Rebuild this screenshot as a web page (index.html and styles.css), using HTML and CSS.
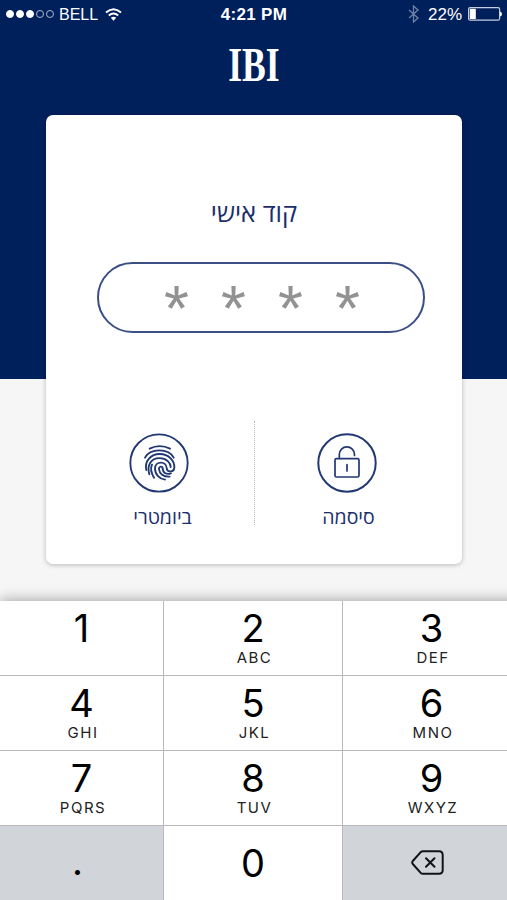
FILE: index.html
```html
<!DOCTYPE html>
<html lang="he">
<head>
    <meta charset="UTF-8">
    <meta name="viewport" content="width=device-width, initial-scale=1.0">
    <title>IBI</title>
    <link rel="stylesheet" href="styles.css">
</head>
<body>

    <header class="header">
        <div class="status-bar">
            <div class="status-left">
                <div class="signal">
                    <i class="full"></i><i class="full"></i><i class="full"></i><i></i><i></i>
                </div>
                <span class="carrier">BELL</span>
                <svg class="wifi" width="17" height="13" viewBox="0 0 17 13" fill="none" stroke="#fff" stroke-width="2">
                    <path d="M1 4.6Q8.5 -2 16 4.6"/>
                    <path d="M3.8 7.5Q8.5 3.4 13.2 7.5"/>
                    <path d="M8.5 12.8L5.8 9.8Q8.5 7.6 11.2 9.8Z" fill="#fff" stroke="none"/>
                </svg>
            </div>
            <span class="time">4:21 PM</span>
            <div class="status-right">
                <svg class="bluetooth" width="11" height="18" viewBox="0 0 11 18" fill="none" stroke="#6d83a8" stroke-width="1.3">
                    <path d="M1 5L10 13L5.5 17V1L10 5L1 13"/>
                </svg>
                <span class="percent">22%</span>
                <svg class="battery" width="34" height="14" viewBox="0 0 34 14">
                    <rect x=".6" y=".6" width="31" height="12.6" rx="1.5" fill="none" stroke="#c3cde0" stroke-width="1.2"/>
                    <rect x="1.8" y="1.8" width="6" height="10.2" fill="#fff"/>
                    <path d="M32 4.5Q34 5 34 7T32 9.5Z" fill="#fff"/>
                </svg>
            </div>
        </div>
        <div class="logo">IBI</div>
    </header>

    <main class="card">
        <h1 class="title" dir="rtl">קוד אישי</h1>
        <div class="code">
            <span>*</span><span>*</span><span>*</span><span>*</span>
        </div>
        <div class="options">
            <div class="option biometric">
                <svg width="60" height="60" viewBox="25 55 180 180" fill="none" stroke="#213873" stroke-width="5.6" stroke-linecap="round">
                    <circle cx="115" cy="145" r="86"/>
                    <path d="M87 102Q117 87 148 102"/>
                    <path d="M73 129C88 100 144 100 159 129"/>
                    <path d="M77 166C71 139 91 118 117 118C145 118 162 139 161 158C160 174 139 174 138 160C137 138 103 138 103 162C103 179 117 193 133 195"/>
                    <path d="M86 179C78 153 90 130.500 117 130.500C138 130.500 150 145 150 157"/>
                    <path d="M100 189C91 174 89 160 94 150"/>
                    <path d="M115 161C116 154 126 154 126 162C127 176 138 180 151 176"/>
                    <path d="M115 163C116 177 128 187 147 186"/>
                </svg>
                <span class="label" dir="rtl">ביומטרי</span>
            </div>
            <div class="divider"></div>
            <div class="option password">
                <svg width="60" height="60" viewBox="0 0 60 60" fill="none" stroke="#213873" stroke-width="1.7" stroke-linecap="round">
                    <circle cx="30" cy="30" r="28.7" stroke-width="2"/>
                    <rect x="18" y="25.7" width="24" height="18.3" rx="1.5"/>
                    <path d="M22.3 25.5V21.5A7.6 7.6 0 0 1 37.5 21.5V22.5M30 31.5V38"/>
                </svg>
                <span class="label" dir="rtl">סיסמה</span>
            </div>
        </div>
    </main>

    <div class="keypad">
        <button>1</button>
        <button>2<small>ABC</small></button>
        <button>3<small>DEF</small></button>

        <button>4<small>GHI</small></button>
        <button>5<small>JKL</small></button>
        <button>6<small>MNO</small></button>

        <button>7<small>PQRS</small></button>
        <button>8<small>TUV</small></button>
        <button>9<small>WXYZ</small></button>

        <button class="gray dot">.</button>
        <button class="zero">0</button>
        <button class="gray delete">
            <svg width="33" height="25" viewBox="0 0 33 25" fill="none" stroke="#111417" stroke-width="2" stroke-linecap="round" stroke-linejoin="round">
                <path d="M12 1.2H28Q31.7 1.2 31.7 5V20Q31.7 23.8 28 23.8H12Q10.7 23.8 9.5 22.7L1.8 14Q.6 12.5 1.8 11L9.5 2.3Q10.7 1.2 12 1.2Z"/>
                <path d="M15 8.3L23.5 16.7M23.5 8.3L15 16.7"/>
            </svg>
        </button>
    </div>

</body>
</html>
```
FILE: styles.css
```css
* {
    box-sizing: border-box;
    margin: 0;
    padding: 0;
}

body {
    width: 507px;
    height: 900px;
    overflow: hidden;
    background: #f6f6f6;
    font-family: "Open Sans", "Noto Sans", sans-serif;
    color: #1b2f6c;
}

.header {
    height: 379px;
    background: #00205c;
    color: white;
}

.status-bar {
    display: grid;
    grid-template-columns: 1fr auto 1fr;
    align-items: center;
    height: 28px;
    padding: 0 5px 0 6px;
    font-family: "Liberation Sans", Arial, sans-serif;
    font-size: 17px;
}

.status-left,
.status-right,
.signal {
    display: flex;
    align-items: center;
}

.status-right {
    justify-content: flex-end;
}

.signal {
    gap: 2px;
}

.signal i {
    width: 8px;
    height: 8px;
    border: 1px solid #a9b6d0;
    border-radius: 50%;
}

.signal .full {
    background: white;
    border-color: white;
}

.carrier {
    margin: 1px 6px 0 5px;
    font-size: 16px;
}

.wifi {
    margin-left: 1px;
}

.time {
    padding-top: 1px;
    font-size: 17px;
    font-weight: bold;
    letter-spacing: 0.3px;
}

.percent {
    padding-top: 1px;
}

.bluetooth {
    margin-right: 9px;
}

.battery {
    margin-left: 6px;
}

.logo {
    margin-top: 10px;
    padding-left: 1px;
    font-family: "Liberation Serif", serif;
    font-size: 48px;
    font-weight: bold;
    line-height: 54px;
    text-align: center;
    transform: scaleX(0.74);
}

.card {
    width: 416px;
    height: 449px;
    margin: -264px 0 0 46px;
    padding-top: 77px;
    background: white;
    border-radius: 7px;
    box-shadow: 0 1px 5px rgba(0, 0, 0, 0.25);
}

.title {
    font-size: 25.5px;
    font-weight: normal;
    line-height: 40px;
    text-align: center;
}

.code {
    display: flex;
    justify-content: center;
    width: 328px;
    height: 71px;
    margin: 30px 0 0 51px;
    padding-left: 2px;
    border: 2px solid #3b4f85;
    border-radius: 36px;
    color: #929292;
    font-family: "Liberation Sans", Arial, sans-serif;
    font-size: 64px;
    line-height: 90px;
}

.code span {
    width: 57px;
    text-align: center;
}

.options {
    display: flex;
    margin-top: 88px;
}

.option {
    display: flex;
    flex-direction: column;
    align-items: center;
    padding-top: 12px;
}

.biometric {
    width: 208px;
    padding-left: 17px;
}

.password {
    width: 183px;
}

.label {
    margin: 10px 0 0 4px;
    font-size: 19.5px;
    line-height: 28px;
}

.biometric .label {
    margin-left: 8px;
}

.divider {
    height: 104px;
    border-left: 1px dotted #bbb;
}

/* last column runs off the right edge */
.keypad {
    display: grid;
    grid-template-columns: 164px 179px 178px;
    grid-template-rows: 75px 75px 75px 75px;
    width: 521px;
    margin-top: 37px;
    box-shadow: 0 -2px 12px rgba(0, 0, 0, 0.3);
}

.keypad button {
    display: flex;
    flex-direction: column;
    align-items: center;
    padding-top: 4px;
    background: white;
    border: solid #b9b9b9;
    border-width: 0 1px 1px 0;
    color: #000;
    font-family: Inter, sans-serif;
    font-size: 38px;
    line-height: 46px;
}

.keypad small {
    margin: -1px 0 0 3px;
    color: #222;
    font-size: 15px;
    line-height: 15px;
    letter-spacing: 1.5px;
}

.keypad .gray {
    background: #d1d5da;
}

.keypad .dot {
    padding: 12px 8px 0 0;
}

.keypad .zero {
    padding-top: 14px;
}

.keypad .delete {
    padding: 24px 8px 0 0;
}
```
